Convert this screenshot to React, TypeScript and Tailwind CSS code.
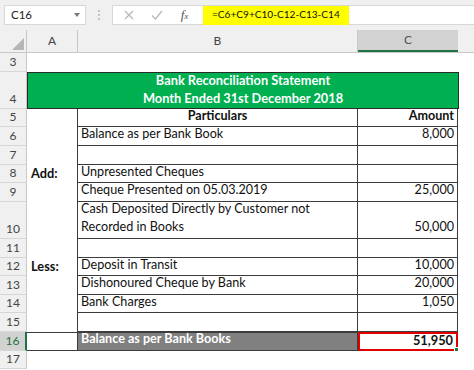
import React from "react";

type RowProps = {
  n: number | string;
  h?: string;
  selected?: boolean;
  children?: React.ReactNode;
};

function Row({ n, h = "h-[18.6px]", selected, children }: RowProps) {
  return (
    <div className={`flex ${h}`}>
      <div
        className={`w-[27px] shrink-0 flex items-end justify-center pb-[2px] text-[12px] leading-[15px] border-b border-[#d6d6d6] ${
          selected
            ? "bg-[#d2d2d2] text-[#217346] border-r-2 border-r-[#217346]"
            : "bg-[#f0f0f0] text-[#444] border-r border-r-[#c8c8c8]"
        }`}
      >
        {n}
      </div>
      {children}
    </div>
  );
}

const cellB = "w-[280px] shrink-0 border-r border-b border-[#3c3c3c] flex items-end px-[3px] pb-[1px] text-[12.6px] leading-[18.6px] whitespace-nowrap text-[#111]";
const cellC = "w-[100px] shrink-0 border-r border-b border-[#3c3c3c] flex items-end justify-end px-[3px] pb-[1px] text-[12.6px] leading-[18.6px] text-[#111]";
const cellA = "w-[51px] shrink-0 border-r border-[#3c3c3c] flex items-end px-[4px] pb-[1px] text-[12.8px] leading-[18.6px] font-bold text-[#111]";

export default function App() {
  const items: { n: number; a?: string; b?: React.ReactNode; c?: string; tall?: boolean }[] = [
    { n: 6, b: "Balance as per Bank Book", c: "8,000" },
    { n: 7 },
    { n: 8, a: "Add:", b: "Unpresented Cheques" },
    { n: 9, b: "Cheque Presented on 05.03.2019", c: "25,000" },
    {
      n: 10,
      b: (
        <span>
          Cash Deposited Directly by Customer not
          <br />
          Recorded in Books
        </span>
      ),
      c: "50,000",
      tall: true,
    },
    { n: 11 },
    { n: 12, a: "Less:", b: "Deposit in Transit", c: "10,000" },
    { n: 13, b: "Dishonoured Cheque by Bank", c: "20,000" },
    { n: 14, b: "Bank Charges", c: "1,050" },
    { n: 15 },
  ];

  return (
    <div className="w-[474px] h-[370px] overflow-hidden bg-white font-['Lato','Open_Sans',sans-serif]">
      {/* formula bar */}
      <div className="h-[30px] bg-[#f0f0f0] flex items-start pt-[5px] pl-[4px]">
        <div className="w-[82px] h-[20px] bg-white border border-[#d8d8d8] flex items-center justify-between pl-[6px] pr-[5px] text-[11.5px] text-[#222]">
          <span>C16</span>
          <span className="w-0 h-0 border-l-[3.5px] border-r-[3.5px] border-t-[4px] border-l-transparent border-r-transparent border-t-[#777]" />
        </div>
        <div className="w-[26px] h-[20px] flex flex-col items-center justify-center gap-[2px]">
          <span className="w-[2px] h-[2px] bg-[#c4c4c4]" />
          <span className="w-[2px] h-[2px] bg-[#c4c4c4]" />
          <span className="w-[2px] h-[2px] bg-[#c4c4c4]" />
        </div>
        <div className="flex-1 h-[20px] bg-white border border-[#d8d8d8] border-r-0 flex items-center">
          <div className="w-[88px] flex items-center justify-around pl-[2px] pr-[4px]">
            <svg width="10" height="10" viewBox="0 0 10 10">
              <path d="M1 1L9 9M9 1L1 9" stroke="#b8b8b8" strokeWidth="1.3" />
            </svg>
            <svg width="12" height="10" viewBox="0 0 12 10">
              <path d="M1 5.5L4.5 9L11 1" stroke="#b8b8b8" strokeWidth="1.3" fill="none" />
            </svg>
            <span className="text-[13px] italic text-[#555] font-['Liberation_Serif',serif]">
              f<span className="text-[9px]">x</span>
            </span>
          </div>
          <div className="h-full flex items-center pl-[2px]">
            <span className="h-[19px] bg-[#ffff00] px-[9px] flex items-center text-[10.1px] text-[#111]">
              =C6+C9+C10-C12-C13-C14
            </span>
          </div>
        </div>
      </div>

      {/* column headers */}
      <div className="flex h-[23px] bg-[#f0f0f0] border-b border-[#c8c8c8] text-[12px] text-[#444]">
        <div className="w-[27px] shrink-0 border-r border-[#c8c8c8] flex items-end justify-end pr-[2px] pb-[2px]">
          <span className="w-0 h-0 border-b-[12px] border-l-[12px] border-l-transparent border-b-[#b5b5b5]" />
        </div>
        <div className="w-[51px] shrink-0 border-r border-[#c8c8c8] flex items-center justify-center">A</div>
        <div className="w-[280px] shrink-0 border-r border-[#c8c8c8] flex items-center justify-center">B</div>
        <div className="w-[100px] shrink-0 bg-[#d2d2d2] border-b-2 border-[#217346] flex items-center justify-center text-[#555]">C</div>
        <div className="flex-1" />
      </div>

      {/* sheet */}
      <Row n={3} />
      <Row n={4} h="h-[37.2px]">
        <div className="w-[432px] shrink-0 bg-[#00b050] border border-[#2b2b2b] flex flex-col items-center justify-end pb-[0px] text-white font-bold text-[12.8px] leading-[18.6px]">
          <span>Bank Reconciliation Statement</span>
          <span>Month Ended 31st December 2018</span>
        </div>
      </Row>
      <Row n={5}>
        <div className={cellA} />
        <div className={`${cellB} justify-center font-bold`}>Particulars</div>
        <div className={`${cellC} justify-center font-bold`}>Amount</div>
      </Row>
      {items.map((r) => (
        <Row key={r.n} n={r.n} h={r.tall ? "h-[37.2px]" : "h-[18.6px]"}>
          <div className={cellA}>{r.a}</div>
          <div className={cellB}>{r.b}</div>
          <div className={cellC}>{r.c}</div>
        </Row>
      ))}
      <Row n={16} selected>
        <div className={`${cellA} border-t border-b`} />
        <div className={`${cellB} border-t bg-[#808080] text-white font-bold`}>Balance as per Bank Books</div>
        <div className="w-[100px] shrink-0 border-2 border-[#e00000] flex items-end justify-end px-[3px] pb-[0px] text-[12.8px] leading-[18px] font-bold text-[#111] relative">
          51,950
          <span className="absolute -right-[3px] -bottom-[3px] w-[5px] h-[5px] bg-[#217346] border border-white" />
        </div>
      </Row>
      <Row n={17} />
    </div>
  );
}
